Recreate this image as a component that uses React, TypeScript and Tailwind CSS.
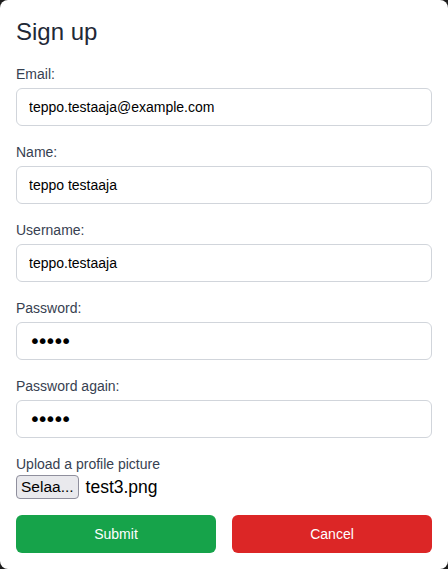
import React from "react";

const Field = ({ label, value, type = "text" }: { label: string; value: string; type?: string }) => (
  <div className="mb-4 flex flex-col gap-1">
    <label className="text-sm leading-5 text-[#374151]">{label}</label>
    <input
      type={type}
      defaultValue={value}
      readOnly
      className={
        type === "password"
          ? "h-[38px] w-full rounded-md border border-[#d1d5db] bg-white px-3 font-['DejaVu_Sans'] text-[20px] tracking-[-4px] text-black outline-none"
          : "h-[38px] w-full rounded-md border border-[#d1d5db] bg-white px-3 text-sm text-black outline-none"
      }
    />
  </div>
);

export default function App() {
  return (
    <div className="h-[569px] w-[448px] bg-[#1c1c1c]" style={{ fontFamily: '"Liberation Sans", Arial, sans-serif' }}>
      <div className="flex h-full w-full flex-col rounded-lg bg-white p-4">
        <h1 className="mb-4 text-2xl leading-8 text-[#1f2937]">Sign up</h1>
        <Field label="Email:" value="teppo.testaaja@example.com" />
        <Field label="Name:" value="teppo testaaja" />
        <Field label="Username:" value="teppo.testaaja" />
        <Field label="Password:" value="12345" type="password" />
        <Field label="Password again:" value="12345" type="password" />
        <div className="flex flex-col">
          <label className="text-sm leading-5 text-[#374151]">Upload a profile picture</label>
          <div className="mt-px flex h-6 items-center gap-[7px]">
            <span className="flex h-6 items-center rounded-[4px] border border-[#8f8f9d] bg-[#e9e9ed] px-[4px] text-[15.5px] leading-none text-black">
              Selaa...
            </span>
            <span className="text-[17.5px] leading-6 text-black">test3.png</span>
          </div>
        </div>
        <div className="mt-4 grid grid-cols-2 gap-4">
          <button className="h-[38px] rounded-md bg-[#16a34a] text-sm text-white">Submit</button>
          <button className="h-[38px] rounded-md bg-[#dc2626] text-sm text-white">Cancel</button>
        </div>
      </div>
    </div>
  );
}
